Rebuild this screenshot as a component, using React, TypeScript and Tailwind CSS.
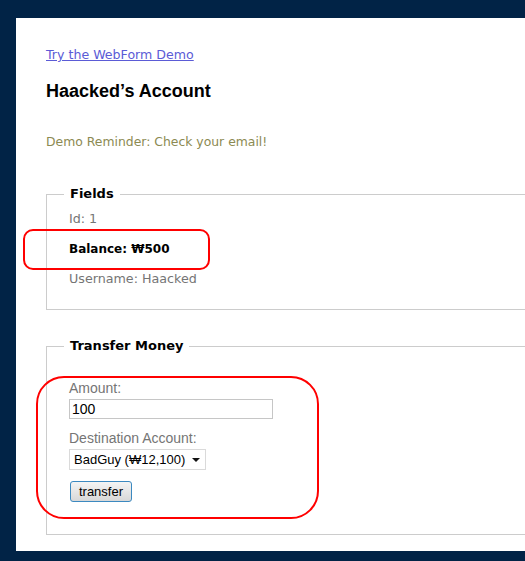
import React from "react";

const verdana = { fontFamily: '"DejaVu Sans", Verdana, sans-serif' };
const arial = { fontFamily: '"Liberation Sans", Arial, sans-serif' };

function FieldRow({ children, bold }: { children: React.ReactNode; bold?: boolean }) {
  return (
    <div className={bold ? "text-[12px] leading-[16px] font-bold text-black" : "text-[12.7px] leading-[16px] text-[#757575]"} style={verdana}>
      {children}
    </div>
  );
}

export default function App() {
  return (
    <div className="w-full h-[561px] overflow-hidden bg-[#012346] pt-[18px] pl-[16px]">
      <div className="relative w-[620px] h-[533px] bg-white pt-[29px] pl-[30px]">
        <a href="#" className="block w-fit text-[12.6px] leading-[16px] text-[#5b5bd6] underline" style={verdana}>
          Try the WebForm Demo
        </a>
        <h1 className="mt-[18px] text-[18px] leading-[21px] font-bold text-black" style={arial}>
          Haacked’s Account
        </h1>
        <p className="mt-[32px] text-[12.4px] leading-[16px] text-[#8c8a52]" style={verdana}>
          Demo Reminder: Check your email!
        </p>

        <fieldset className="mt-[36px] w-[560px] border border-[#cccccc] pl-[17px] pb-[22px]">
          <legend className="px-[6px] text-[13px] leading-[16px] font-bold text-black" style={verdana}>
            Fields
          </legend>
          <div className="pl-[5px] pt-[9px] flex flex-col gap-[14px]">
            <FieldRow>Id: 1</FieldRow>
            <FieldRow bold>Balance: ₩500</FieldRow>
            <FieldRow>Username: Haacked</FieldRow>
          </div>
        </fieldset>

        <fieldset className="mt-[28px] w-[560px] border border-[#cccccc] pl-[17px] pb-[32px]">
          <legend className="px-[6px] text-[13px] leading-[16px] font-bold text-black" style={verdana}>
            Transfer Money
          </legend>
          <div className="pl-[5px] pt-[27px] flex flex-col items-start" style={arial}>
            <label className="text-[14px] leading-[15px] text-[#757575]">Amount:</label>
            <div className="mt-[3px] w-[204px] h-[20px] border border-[#c6c6c6] px-[2px] text-[14px] leading-[18px] text-black">
              100
            </div>
            <label className="mt-[12px] text-[14px] leading-[15px] text-[#757575]">Destination Account:</label>
            <div className="mt-[3px] w-[137px] h-[21px] border border-[#dadada] pl-[4px] pr-[5px] flex items-center justify-between whitespace-nowrap text-[13px] leading-[19px] text-black">
              <span>BadGuy (₩12,100)</span>
              <svg width="8" height="4" viewBox="0 0 8 4">
                <path d="M0 0h8L4 4z" fill="#111" />
              </svg>
            </div>
            <button className="mt-[11px] ml-[1px] w-[62px] h-[21px] rounded-[3px] border border-[#3c89c0] bg-gradient-to-b from-[#f4f4f4] to-[#d8d8d8] text-[13px] leading-[19px] text-black">
              transfer
            </button>
          </div>
        </fieldset>

        <div className="absolute left-[7px] top-[211px] w-[187px] h-[41px] rounded-[10px] border-2 border-[#ff0000]" />
        <div className="absolute left-[20px] top-[358px] w-[283px] h-[143px] rounded-[28px] border-2 border-[#ff0000]" />
      </div>
    </div>
  );
}
